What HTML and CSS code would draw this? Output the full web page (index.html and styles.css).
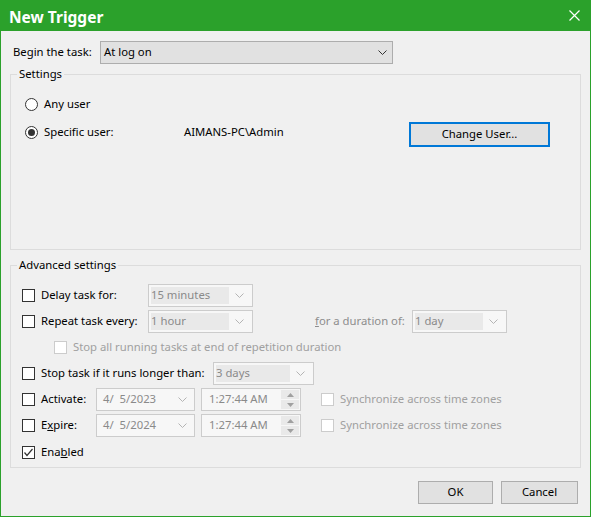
FILE: index.html
```html
<!DOCTYPE html>
<html>
<head>
<meta charset="utf-8">
<link rel="stylesheet" href="styles.css">
</head>
<body>
<div class="window">
  <div class="titlebar">
    <span class="title">New Trigger</span>
    <svg class="close" width="11" height="11" viewBox="0 0 11 11"><path d="M0.5 0.5 L10.5 10.5 M10.5 0.5 L0.5 10.5" stroke="#fff" stroke-width="1.2" fill="none"/></svg>
  </div>
  <div class="content">
    <div class="begin-row">
      <span class="begin-label">Begin the task:</span>
      <div class="select">
        <span class="txt">At log on</span>
        <svg width="9" height="5" viewBox="0 0 9 5"><polyline points="0.5,0.5 4.5,4.5 8.5,0.5" fill="none" stroke="#333" stroke-width="1"/></svg>
      </div>
    </div>

    <fieldset class="group settings">
      <legend>Settings</legend>
      <div class="body">
        <div class="radio-row">
          <span class="radio"></span><span class="txt">Any user</span>
        </div>
        <div class="user-row">
          <div class="radio-row user-choice">
            <span class="radio checked"></span><span class="txt">Specific user:</span>
          </div>
          <span class="username">AIMANS-PC\Admin</span>
          <button class="btn focused change-user">Change User...</button>
        </div>
      </div>
    </fieldset>

    <fieldset class="group advanced">
      <legend>Advanced settings</legend>
      <div class="body">
        <div class="row">
          <span class="check"></span><span class="lbl w-delay">Delay task for:</span>
          <div class="combo w105"><span class="val">15 minutes</span><span class="arrow"><svg width="9" height="5" viewBox="0 0 9 5"><polyline points="0.5,0.5 4.5,4.5 8.5,0.5" fill="none" stroke="#b4b4b4"/></svg></span></div>
        </div>
        <div class="row">
          <span class="check"></span><span class="lbl w-delay">Repeat task every:</span>
          <div class="combo w105"><span class="val">1 hour</span><span class="arrow"><svg width="9" height="5" viewBox="0 0 9 5"><polyline points="0.5,0.5 4.5,4.5 8.5,0.5" fill="none" stroke="#b4b4b4"/></svg></span></div>
          <span class="lbl disabled-text duration-lbl"><u>f</u>or a duration of:</span>
          <div class="combo w95"><span class="val">1 day</span><span class="arrow"><svg width="9" height="5" viewBox="0 0 9 5"><polyline points="0.5,0.5 4.5,4.5 8.5,0.5" fill="none" stroke="#b4b4b4"/></svg></span></div>
        </div>
        <div class="row indent">
          <span class="check disabled"></span><span class="lbl disabled-text">Stop all running tasks at end of repetition duration</span>
        </div>
        <div class="row">
          <span class="check"></span><span class="lbl w-stop">Stop task if it runs longer than:</span>
          <div class="combo w101"><span class="val">3 days</span><span class="arrow"><svg width="9" height="5" viewBox="0 0 9 5"><polyline points="0.5,0.5 4.5,4.5 8.5,0.5" fill="none" stroke="#b4b4b4"/></svg></span></div>
        </div>
        <div class="row">
          <span class="check"></span><span class="lbl w-date">Activate:</span>
          <div class="picker date"><span class="pval">4/  5/2023</span><svg width="9" height="5" viewBox="0 0 9 5"><polyline points="0.5,0.5 4.5,4.5 8.5,0.5" fill="none" stroke="#b4b4b4"/></svg></div>
          <div class="picker time"><span class="pval">1:27:44 AM</span>
            <span class="spin"><span class="spin-btn"><svg width="7" height="4" viewBox="0 0 7 4"><polygon points="0,4 3.5,0 7,4" fill="#a0a0a0"/></svg></span><span class="spin-btn"><svg width="7" height="4" viewBox="0 0 7 4"><polygon points="0,0 3.5,4 7,0" fill="#a0a0a0"/></svg></span></span>
          </div>
          <span class="check disabled sync-check"></span><span class="lbl disabled-text">Synchronize across time zones</span>
        </div>
        <div class="row">
          <span class="check"></span><span class="lbl w-date">E<u>x</u>pire:</span>
          <div class="picker date"><span class="pval">4/  5/2024</span><svg width="9" height="5" viewBox="0 0 9 5"><polyline points="0.5,0.5 4.5,4.5 8.5,0.5" fill="none" stroke="#b4b4b4"/></svg></div>
          <div class="picker time"><span class="pval">1:27:44 AM</span>
            <span class="spin"><span class="spin-btn"><svg width="7" height="4" viewBox="0 0 7 4"><polygon points="0,4 3.5,0 7,4" fill="#a0a0a0"/></svg></span><span class="spin-btn"><svg width="7" height="4" viewBox="0 0 7 4"><polygon points="0,0 3.5,4 7,0" fill="#a0a0a0"/></svg></span></span>
          </div>
          <span class="check disabled sync-check"></span><span class="lbl disabled-text">Synchronize across time zones</span>
        </div>
        <div class="row enabled-row">
          <span class="check"><svg width="11" height="11" viewBox="0 0 11 11"><polyline points="1.5,5.5 4,8.5 9.5,2" fill="none" stroke="#333" stroke-width="1.2"/></svg></span><span class="lbl">Ena<u>b</u>led</span>
        </div>
      </div>
    </fieldset>

    <div class="footer">
      <button class="btn ok">OK</button>
      <button class="btn cancel">Cancel</button>
    </div>
  </div>
</div>
</body>
</html>
```

FILE: styles.css
```css
* { box-sizing: border-box; }

body {
  margin: 0;
  font-family: "Noto Sans", "DejaVu Sans", sans-serif;
  font-size: 11.3px;
  color: #000;
  background: #ffffff;
}

.window {
  width: 591px;
  height: 517px;
  border: 1px solid #2ba12b;
  border-top: 0;
  background: #f0f0f0;
  display: flex;
  flex-direction: column;
}

.titlebar {
  height: 31px;
  flex: none;
  background: #2ba12b;
  color: #fff;
  display: flex;
  align-items: center;
  justify-content: space-between;
  padding: 2px 10px 0 8px;
}

.title {
  font-weight: 700;
  font-size: 15.5px;
}

.close { display: block; margin-top: -2px; }

.content {
  flex: 1;
  display: flex;
  flex-direction: column;
  padding: 10px 9px 0;
}

.begin-row {
  display: flex;
  align-items: center;
  height: 23px;
  padding-left: 3px;
}

.begin-label { width: 87px; padding-bottom: 2px; }
.txt { padding-bottom: 2px; }

.select {
  width: 293px;
  height: 23px;
  border: 1px solid #adadad;
  background: #e1e1e1;
  display: flex;
  align-items: center;
  justify-content: space-between;
  padding: 0 5px 0 3px;
}

.group {
  margin: 0;
  padding: 0;
  border: 1px solid #dcdcdc;
  min-width: 0;
}

.group legend {
  margin-left: 6px;
  padding: 0 2px;
  line-height: 16px;
}

.settings {
  margin-top: 2px;
  height: 184px;
}

.settings .body {
  padding: 14px 0 0 14px;
  display: flex;
  flex-direction: column;
  gap: 10px;
}

.radio-row {
  display: flex;
  align-items: center;
  height: 16px;
}

.radio {
  width: 13px;
  height: 13px;
  border: 1px solid #333;
  border-radius: 50%;
  background: #fff;
  margin-right: 6px;
  flex: none;
  display: flex;
  align-items: center;
  justify-content: center;
}

.radio.checked::after {
  content: "";
  width: 7px;
  height: 7px;
  border-radius: 50%;
  background: #333;
}

.user-row {
  display: flex;
  align-items: flex-start;
  height: 25px;
}

.user-choice {
  width: 159px;
  margin-top: 2px;
}

.username {
  width: 225px;
  margin-top: 2px;
}

.btn {
  font: inherit;
  color: #000;
  height: 23px;
  border: 1px solid #adadad;
  background: #e1e1e1;
  padding: 0 0 2px;
}

.btn.focused {
  border: 2px solid #0078d7;
}

.change-user {
  width: 141px;
  height: 25px;
}

.advanced {
  margin-top: 7px;
  height: 211px;
}

.advanced .body {
  padding: 11px 0 0 11px;
  display: flex;
  flex-direction: column;
  gap: 3px;
}

.row {
  display: flex;
  align-items: center;
  height: 23px;
}

.row.indent { padding-left: 32px; }
.enabled-row { margin-top: 1px; }

.check {
  width: 13px;
  height: 13px;
  border: 1px solid #333;
  background: #fff;
  margin-right: 6px;
  flex: none;
  display: flex;
  align-items: center;
  justify-content: center;
}

.check.disabled { border-color: #cccccc; }
.sync-check { margin-left: 20px; }

.lbl { white-space: nowrap; padding-bottom: 2px; }
.w-delay { width: 107px; }
.w-stop { width: 172px; }
.w-date { width: 55px; }
.duration-lbl { margin-left: 62px; width: 97px; }

.disabled-text { color: #a0a0a0; }
.duration-lbl { color: #8d8d8d; }

.combo {
  height: 23px;
  border: 1px solid #cccccc;
  background: #f7f7f7;
  display: flex;
  align-items: stretch;
  padding: 2px;
  color: #8a8a8a;
}

.combo .val {
  flex: 1;
  background: #e9e9e9;
  line-height: 16px;
  white-space: nowrap;
}

.combo .arrow {
  width: 21px;
  display: flex;
  align-items: center;
  justify-content: center;
}

.w105 { width: 105px; }
.w95 { width: 95px; }
.w101 { width: 101px; }

.picker {
  height: 23px;
  border: 1px solid #cccccc;
  background: #f7f7f7;
  display: flex;
  align-items: center;
  justify-content: space-between;
  color: #8a8a8a;
}

.pval { white-space: pre; padding-bottom: 2px; }

.picker.date {
  width: 99px;
  padding: 0 7px 0 6px;
}

.picker.time {
  width: 100px;
  margin-left: 6px;
  padding: 0 1px 0 7px;
}

.spin {
  display: flex;
  flex-direction: column;
  gap: 1px;
}

.spin-btn {
  width: 18px;
  height: 9px;
  background: #e9e9e9;
  display: flex;
  align-items: center;
  justify-content: center;
}

.footer {
  display: flex;
  justify-content: flex-end;
  gap: 8px;
  margin-top: 13px;
  padding-right: 3px;
}

.ok { width: 75px; }
.cancel { width: 77px; }
```
